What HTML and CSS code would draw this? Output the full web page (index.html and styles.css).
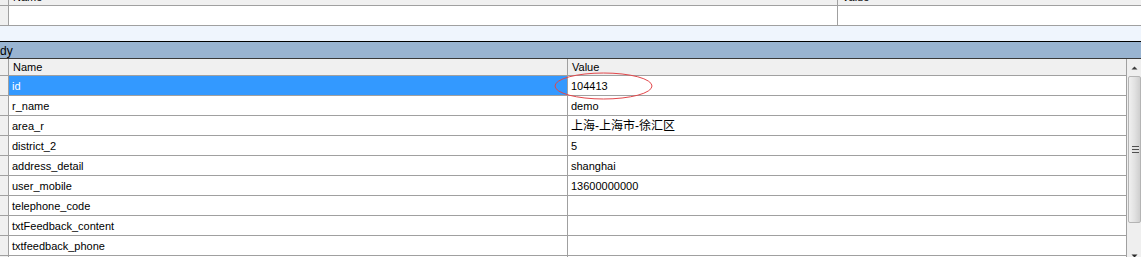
FILE: index.html
```html
<!DOCTYPE html>
<html>
  <head>
    <meta charset="utf-8">
    <link rel="stylesheet" href="styles.css">
  </head>
  <body>
    <div class="top-grid">
        <div class="row head">
            <div class="gutter"></div>
            <div class="cell top-name">Name</div>
            <div class="cell top-value">Value</div>
        </div>
        <div class="row">
            <div class="gutter"></div>
            <div class="cell top-name"></div>
            <div class="cell top-value"></div>
        </div>
    </div>
    <div class="sep"></div>
    <div class="titlebar">dy</div>
    <div class="lower">
        <div class="grid">
            <div class="row head">
                <div class="gutter"></div>
                <div class="cell name">Name</div>
                <div class="cell value">Value</div>
            </div>
            <div class="row selected">
                <div class="gutter"></div>
                <div class="cell name">id</div>
                <div class="cell value marked">104413
                    <svg class="ring" width="99" height="28" viewBox="0 0 99 28"><ellipse cx="49.5" cy="14" rx="48.5" ry="13" fill="none" stroke="#e2474b" stroke-width="1"/></svg>
                </div>
            </div>
            <div class="row">
                <div class="gutter"></div>
                <div class="cell name">r_name</div>
                <div class="cell value">demo</div>
            </div>
            <div class="row">
                <div class="gutter"></div>
                <div class="cell name">area_r</div>
                <div class="cell value cjk">上海-上海市-徐汇区</div>
            </div>
            <div class="row">
                <div class="gutter"></div>
                <div class="cell name">district_2</div>
                <div class="cell value">5</div>
            </div>
            <div class="row">
                <div class="gutter"></div>
                <div class="cell name">address_detail</div>
                <div class="cell value">shanghai</div>
            </div>
            <div class="row">
                <div class="gutter"></div>
                <div class="cell name">user_mobile</div>
                <div class="cell value">13600000000</div>
            </div>
            <div class="row">
                <div class="gutter"></div>
                <div class="cell name">telephone_code</div>
                <div class="cell value"></div>
            </div>
            <div class="row">
                <div class="gutter"></div>
                <div class="cell name">txtFeedback_content</div>
                <div class="cell value"></div>
            </div>
            <div class="row">
                <div class="gutter"></div>
                <div class="cell name">txtfeedback_phone</div>
                <div class="cell value"></div>
            </div>
            <div class="row">
                <div class="gutter"></div>
                <div class="cell name"></div>
                <div class="cell value"></div>
            </div>
        </div>
        <div class="scrollbar">
            <div class="arrow">
                <svg width="7" height="4" viewBox="0 0 7 4"><path d="M3.5 0.5 L6.5 3.5 L0.5 3.5 Z" fill="#3c3c3c"/></svg>
            </div>
            <div class="thumb">
                <div class="grip"></div>
            </div>
            <div class="track"></div>
            <div class="arrow down">
                <svg width="7" height="4" viewBox="0 0 7 4"><path d="M0.5 0.5 L6.5 0.5 L3.5 3.5 Z" fill="#2a2a2a"/></svg>
            </div>
        </div>
    </div>
  </body>
</html>
```

FILE: styles.css
```css
html, body {
    margin: 0;
    padding: 0;
}

body {
    width: 1141px;
    height: 257px;
    overflow: hidden;
    background: #ffffff;
    color: #000000;
    font-family: "Liberation Sans", "Noto Sans CJK SC", sans-serif;
    font-size: 11px;
}

.top-grid {
    margin-top: -11px;
}

.row {
    display: flex;
    height: 19px;
    border-bottom: 1px solid #a0a0a0;
    background: #ffffff;
}

.row.head {
    height: 16px;
    background: #f0f0f0;
}

.gutter {
    width: 8px;
    flex: none;
    background: #f0f0f0;
    border-right: 1px solid #a0a0a0;
}

.cell {
    flex: none;
    box-sizing: border-box;
    padding-left: 3px;
    line-height: 21px;
    white-space: nowrap;
    overflow: hidden;
}

.head .cell {
    padding-left: 4px;
    line-height: 17px;
}

.top-name {
    width: 829px;
    border-right: 1px solid #a0a0a0;
}

.top-value {
    flex: 1;
}

.sep {
    height: 15px;
    background: #eff5fd;
}

.titlebar {
    height: 16px;
    border-top: 1px solid #000000;
    border-bottom: 1px solid #3a3a3a;
    background: #99b4d1;
    font-size: 12px;
    line-height: 18px;
    overflow: hidden;
}

.lower {
    display: flex;
}

.grid {
    width: 1127px;
    flex: none;
}

.name {
    width: 559px;
    border-right: 1px solid #a0a0a0;
}

.value {
    width: 559px;
    border-right: 1px solid #a0a0a0;
}

.selected .name {
    background: #3399ff;
    color: #ffffff;
}

.cjk {
    font-size: 12px;
}

.marked {
    position: relative;
    overflow: visible;
}

.ring {
    position: absolute;
    left: -14px;
    top: -4px;
}

.scrollbar {
    width: 14px;
    display: flex;
    flex-direction: column;
    background: #efefef;
}

.arrow {
    height: 17px;
    display: flex;
    align-items: center;
    justify-content: center;
    padding-left: 1px;
}

.arrow.down {
    align-items: flex-start;
    padding-top: 1px;
}

.thumb {
    height: 145px;
    margin-left: 1px;
    border: 1px solid #b4b4b4;
    border-radius: 2px;
    background: linear-gradient(to right, #f0f0f0, #e2e2e2 50%, #cfcfcf);
    display: flex;
    align-items: center;
    justify-content: center;
}

.grip {
    width: 7px;
    height: 5px;
    margin-left: 2px;
    border-top: 1px solid #505050;
    border-bottom: 1px solid #505050;
    background: linear-gradient(#e2e2e2 2px, #505050 2px, #505050 3px, #e2e2e2 3px);
}

.track {
    height: 30px;
    background: #efefef;
}
```
